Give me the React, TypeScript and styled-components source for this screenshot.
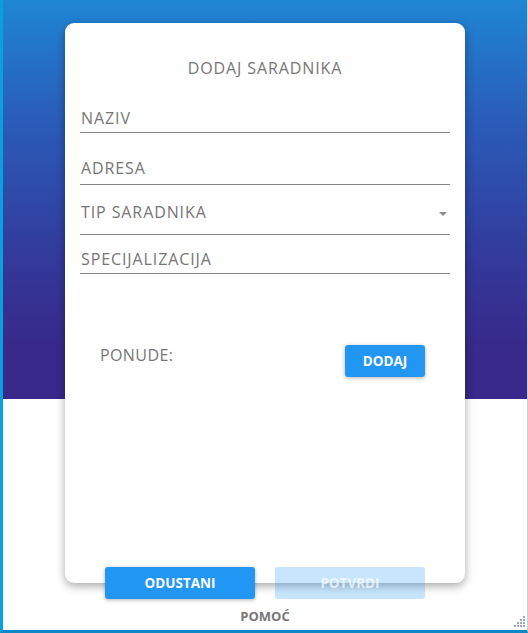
import React from "react";
import styled, { createGlobalStyle } from "styled-components";

const Global = createGlobalStyle`
  html, body { margin: 0; padding: 0; overflow: hidden; background: #fff; }
  body { font-family: "Open Sans", "Noto Sans", sans-serif; }
  * { box-sizing: border-box; }
`;

const Window = styled.div`
  position: relative;
  width: 528px;
  height: 633px;
  display: flex;
  flex-direction: column;
  align-items: center;
  border-left: 3px solid #0aa0dc;
  border-right: 1px solid #c9cfd8;
  border-bottom: 3px solid #0c89c6;
  background: linear-gradient(
    to bottom,
    #1f86d4 0px,
    #2a5cb9 120px,
    #33399a 260px,
    #38298a 350px,
    #38298a 399px,
    #ffffff 399px
  );
  padding-top: 23px;
`;

const Card = styled.div`
  width: 400px;
  height: 560px;
  background: #fff;
  border-radius: 9px;
  box-shadow: 0 3px 10px rgba(0, 0, 0, 0.35);
  padding: 34px 15px 0;
  display: flex;
  flex-direction: column;
`;

const Title = styled.div`
  text-align: center;
  font-size: 16px;
  line-height: 22px;
  letter-spacing: 0.9px;
  color: #767676;
`;

const Field = styled.div<{ $mt: number; $pb: number }>`
  margin-top: ${(p) => p.$mt}px;
  padding: 0 1px ${(p) => p.$pb}px;
  border-bottom: 1px solid #858585;
  display: flex;
  align-items: center;
  justify-content: space-between;
`;

const Label = styled.span`
  font-size: 16px;
  line-height: 22px;
  letter-spacing: 0.9px;
  color: #767676;
`;

const Arrow = styled.svg`
  margin-right: 2px;
  margin-top: 3px;
`;

const OffersRow = styled.div`
  margin-top: 71px;
  padding: 0 25px 0 20px;
  display: flex;
  justify-content: space-between;
  align-items: flex-start;
`;

const OffersLabel = styled.span`
  font-size: 16px;
  line-height: 20px;
  letter-spacing: 0.4px;
  color: #777;
`;

const Button = styled.button<{ $w: number; $disabled?: boolean }>`
  width: ${(p) => p.$w}px;
  height: 32px;
  border: none;
  border-radius: 3px;
  padding: 0;
  font-family: "Open Sans", "Noto Sans", sans-serif;
  font-weight: 700;
  font-size: 13.5px;
  background: ${(p) => (p.$disabled ? "rgba(33,150,243,0.25)" : "#2196f3")};
  color: ${(p) => (p.$disabled ? "rgba(255,255,255,0.7)" : "#fff")};
  box-shadow: ${(p) =>
    p.$disabled ? "none" : "0 1px 4px rgba(0,0,0,0.3)"};
`;

const Actions = styled.div`
  margin-top: -16px;
  display: flex;
  gap: 20px;
`;

const Help = styled.div`
  margin-top: 8px;
  font-size: 13px;
  line-height: 18px;
  font-weight: 700;
  color: #777;
`;

const Grip = styled.svg`
  position: absolute;
  right: 2px;
  bottom: 2px;
`;

export default function App() {
  return (
    <>
      <Global />
      <Window>
        <Card>
          <Title>DODAJ SARADNIKA</Title>
          <Field $mt={28} $pb={3}>
            <Label>NAZIV</Label>
          </Field>
          <Field $mt={24} $pb={5}>
            <Label>ADRESA</Label>
          </Field>
          <Field $mt={16} $pb={11}>
            <Label>TIP SARADNIKA</Label>
            <Arrow width="8" height="4" viewBox="0 0 8 4">
              <path d="M0 0h8L4 4z" fill="#8a8a8a" />
            </Arrow>
          </Field>
          <Field $mt={13} $pb={3}>
            <Label>SPECIJALIZACIJA</Label>
          </Field>
          <OffersRow>
            <OffersLabel>PONUDE:</OffersLabel>
            <Button $w={80}>DODAJ</Button>
          </OffersRow>
        </Card>
        <Actions>
          <Button $w={150}>ODUSTANI</Button>
          <Button $w={150} $disabled>
            POTVRDI
          </Button>
        </Actions>
        <Help>POMOĆ</Help>
        <Grip width="12" height="12" viewBox="0 0 12 12">
          {[
            [10, 0],
            [7, 3],
            [10, 3],
            [4, 6],
            [7, 6],
            [10, 6],
            [1, 9],
            [4, 9],
            [7, 9],
            [10, 9],
          ].map(([x, y], i) => (
            <rect key={i} x={x} y={y} width="2" height="2" fill="#9aa6d0" />
          ))}
        </Grip>
      </Window>
    </>
  );
}
